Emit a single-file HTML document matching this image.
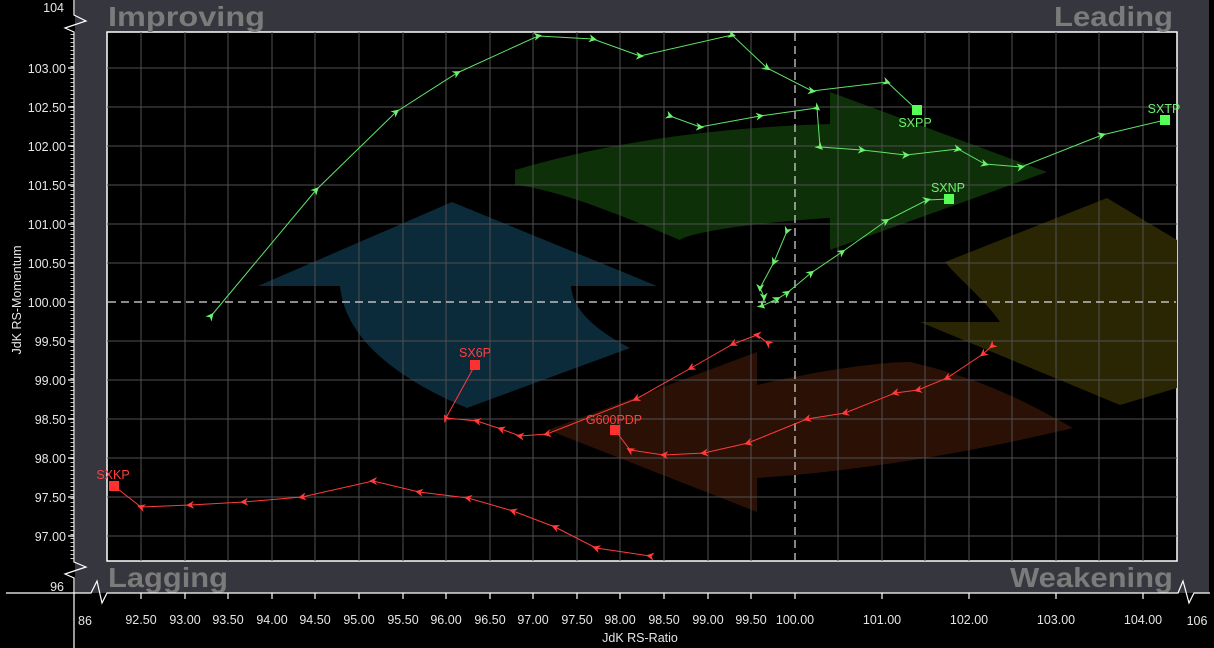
<!DOCTYPE html>
<html><head><meta charset="utf-8"><style>
html,body{margin:0;padding:0;background:#000;width:1214px;height:648px;overflow:hidden}
svg{display:block}
text{font-family:"Liberation Sans",sans-serif}
</style></head><body>
<svg width="1214" height="648" viewBox="0 0 1214 648" xmlns="http://www.w3.org/2000/svg">
<defs>
<marker id="mg" viewBox="0 0 10 10" refX="5" refY="5" markerWidth="8" markerHeight="8" orient="auto" markerUnits="userSpaceOnUse"><path d="M0,0 L10,5 L0,10 L3,5 Z" fill="#6cf26c"/></marker>
<marker id="mr" viewBox="0 0 10 10" refX="5" refY="5" markerWidth="8" markerHeight="8" orient="auto" markerUnits="userSpaceOnUse"><path d="M0,0 L10,5 L0,10 L3,5 Z" fill="#ff3b3b"/></marker>
</defs>
<rect x="0" y="0" width="1214" height="648" fill="#000"/>
<rect x="75" y="0" width="1134" height="593" fill="#36363e"/>
<rect x="107" y="32" width="1070" height="529" fill="#000" stroke="#fff" stroke-width="1.5"/>
<g>
<path d="M258,286 L452,202 L657,286 L571,286 C572,300 580,322 630,348 L467,408 C400,380 345,340 340,286 Z" fill="#0b2a3a"/>
<path d="M515,170 C600,145 700,128 830,124 L830,92 L1047,172 L830,250 L830,218 C760,222 690,232 680,240 C620,215 560,190 515,185 Z" fill="#0d3008"/>
<path d="M548,430 L757,352 L757,385 C820,370 880,362 910,362 C990,380 1040,410 1073,428 C960,455 850,472 757,478 L757,512 Z" fill="#2b1005"/>
<path d="M1107,198 L1177,240 L1177,388 L1120,405 L920,322 L1000,322 C985,300 960,280 945,262 Z" fill="#2a2604"/>
</g>
<g stroke="#505050" stroke-width="1">
<path d="M141,32V561M185,32V561M228,32V561M272,32V561M315,32V561M359,32V561M403,32V561M446,32V561M490,32V561M533,32V561M577,32V561M620,32V561M664,32V561M708,32V561M751,32V561M838,32V561M882,32V561M925,32V561M969,32V561M1012,32V561M1056,32V561M1099,32V561M1143,32V561"/>
<path d="M107,68H1177M107,107H1177M107,146H1177M107,185H1177M107,224H1177M107,263H1177M107,341H1177M107,380H1177M107,419H1177M107,458H1177M107,497H1177M107,536H1177"/>
</g>
<g stroke="#ddd" stroke-width="1.2" stroke-dasharray="8,5">
<path d="M795,33V560M108,302H1176"/>
</g>
<g font-weight="bold" font-size="28" fill="#7b7b7b" lengthAdjust="spacingAndGlyphs">
<text x="108" y="26" textLength="157" lengthAdjust="spacingAndGlyphs">Improving</text>
<text x="1054" y="26" textLength="119" lengthAdjust="spacingAndGlyphs">Leading</text>
<text x="108" y="587" textLength="120" lengthAdjust="spacingAndGlyphs">Lagging</text>
<text x="1010" y="587" textLength="163" lengthAdjust="spacingAndGlyphs">Weakening</text>
</g>
<g stroke="#fff" stroke-width="1.2" fill="none">
<path d="M74,0 V15 L86,21 L65,28 L74,32 V562 L86,567 L65,574 L74,578 V648"/>
<path d="M6,593 H91 L97,581 L102,603 L107,593 H1178 L1183,581 L1189,603 L1194,593 H1210"/>
<path d="M72,34 V560" stroke-width="3" stroke-dasharray="1,3" stroke="#ccc"/>
<path d="M68,68H74M68,107H74M68,146H74M68,185H74M68,224H74M68,263H74M68,302H74M68,341H74M68,380H74M68,419H74M68,458H74M68,497H74M68,536H74"/>
<path d="M141,593v6M185,593v6M228,593v6M272,593v6M315,593v6M359,593v6M403,593v6M446,593v6M490,593v6M533,593v6M577,593v6M620,593v6M664,593v6M708,593v6M751,593v6M795,593v6M882,593v6M969,593v6M1056,593v6M1143,593v6"/>
</g>
<g font-size="12.5" fill="#e6e6e6" text-anchor="end">
<text x="64" y="12">104</text>
<text x="66" y="73">103.00</text><text x="66" y="112">102.50</text><text x="66" y="151">102.00</text><text x="66" y="190">101.50</text><text x="66" y="229">101.00</text><text x="66" y="268">100.50</text><text x="66" y="307">100.00</text><text x="66" y="346">99.50</text><text x="66" y="385">99.00</text><text x="66" y="424">98.50</text><text x="66" y="463">98.00</text><text x="66" y="502">97.50</text><text x="66" y="541">97.00</text>
<text x="64" y="591">96</text>
</g>
<g font-size="12.5" fill="#e6e6e6" text-anchor="middle">
<text x="85" y="625">86</text>
<text x="141" y="624">92.50</text><text x="185" y="624">93.00</text><text x="228" y="624">93.50</text><text x="272" y="624">94.00</text><text x="315" y="624">94.50</text><text x="359" y="624">95.00</text><text x="403" y="624">95.50</text><text x="446" y="624">96.00</text><text x="490" y="624">96.50</text><text x="533" y="624">97.00</text><text x="577" y="624">97.50</text><text x="620" y="624">98.00</text><text x="664" y="624">98.50</text><text x="708" y="624">99.00</text><text x="751" y="624">99.50</text><text x="795" y="624">100.00</text>
<text x="882" y="624">101.00</text><text x="969" y="624">102.00</text><text x="1056" y="624">103.00</text><text x="1143" y="624">104.00</text>
<text x="1197" y="625">106</text>
<text x="640" y="642">JdK RS-Ratio</text>
<text transform="translate(21,300) rotate(-90)">JdK RS-Momentum</text>
</g>
<g fill="none" stroke="#5fe36a" stroke-width="1" marker-mid="url(#mg)" marker-start="url(#mg)">
<polyline points="211,316 316,190 396,112 457,73 538,36 593,39 640,56 732,35 767,68 812,91 887,82 917,110"/>
<polyline points="670,116 700,127 760,116 817,108 820,147 862,150 906,155 958,149 985,164 1021,167 1102,135 1165,120"/>
<polyline points="787,231 774,262 760,288 764,297 762,306 777,299 787,293 811,273 842,252 886,221 927,200 949,199"/>
</g>
<g fill="#55ff55">
<rect x="912" y="105" width="10" height="10"/>
<rect x="1160" y="115" width="10" height="10"/>
<rect x="944" y="194" width="10" height="10"/>
</g>
<g font-size="12.5" fill="#6cf26c" text-anchor="middle">
<text x="915" y="127">SXPP</text>
<text x="1164" y="113">SXTP</text>
<text x="948" y="192">SXNP</text>
</g>
<g fill="none" stroke="#ff3b3b" stroke-width="1" marker-mid="url(#mr)" marker-start="url(#mr)">
<polyline points="650,556 596,548 555,527 513,511 468,498 419,492 373,481 302,497 244,502 190,505 141,507 114,486"/>
<polyline points="768,343 757,335 733,344 691,368 636,399 547,434 520,436 501,429 477,421 446,418 475,365"/>
<polyline points="992,346 983,354 947,378 918,390 895,393 845,413 807,419 748,443 704,453 664,455 630,450 615,430"/>
</g>
<g fill="#ff3030">
<rect x="109" y="481" width="10" height="10"/>
<rect x="470" y="360" width="10" height="10"/>
<rect x="610" y="425" width="10" height="10"/>
</g>
<g font-size="12.5" fill="#ff4040" text-anchor="middle">
<text x="113" y="479">SXKP</text>
<text x="475" y="357">SX6P</text>
<text x="614" y="424">G600PDP</text>
</g>
</svg>
</body></html>
